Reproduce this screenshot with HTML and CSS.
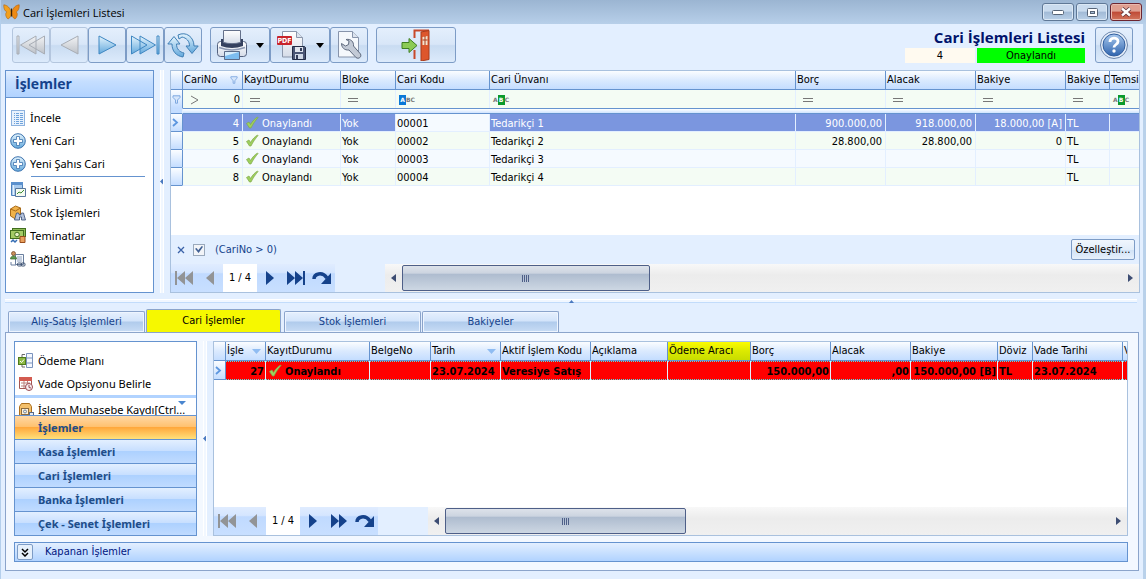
FILE: index.html
```html
<!DOCTYPE html>
<html lang="tr">
<head>
<meta charset="utf-8">
<title>Cari İşlemleri Listesi</title>
<link rel="stylesheet" href="styles.css">
</head>
<body>
<svg class="defs" aria-hidden="true">
  <defs>
    <linearGradient id="gBlue" x1="0" y1="0" x2="0" y2="1"><stop offset="0" stop-color="#e4f4fd"/><stop offset="1" stop-color="#62a8dc"/></linearGradient>
    <linearGradient id="gGrey" x1="0" y1="0" x2="0" y2="1"><stop offset="0" stop-color="#f2f3f5"/><stop offset="1" stop-color="#bcc1c8"/></linearGradient>
    <linearGradient id="gBall" x1="0" y1="0" x2="0" y2="1"><stop offset="0" stop-color="#a9c9ee"/><stop offset="1" stop-color="#2f64ae"/></linearGradient>
    <linearGradient id="gPaper" x1="0" y1="0" x2="0" y2="1"><stop offset="0" stop-color="#ffffff"/><stop offset="1" stop-color="#d5dce8"/></linearGradient>
    <symbol id="check" viewBox="0 0 14 13"><path d="M1.5 7.5 4 6l1.500 2.500C7.500 5 10 2.500 12.500 1l.5.6C10.500 4.500 8 8 6 12H4.500z" fill="#9ed05c" stroke="#7fa84c" stroke-width=".7"/></symbol>
    <symbol id="funnel" viewBox="0 0 9 9"><path d="M1 .8h7v1.700L5.500 5v3.200h-2V5L1 2.500z" fill="#d6e6fb" stroke="#7fa9e0"/></symbol>
    <symbol id="eq" viewBox="0 0 10 5"><path d="M0 1.500h10M0 4.500h10" stroke="#777"/></symbol>
    <symbol id="row" viewBox="0 0 7 9"><path d="M1 1l4 3.500L1 8" fill="none" stroke="#5d97e0" stroke-width="1.800"/></symbol>
    <symbol id="first" viewBox="0 0 20 16"><path d="M1 1h2v14H1zM3 8l8-7v14zM11 8l8-7v14z" fill="currentColor"/></symbol>
    <symbol id="last" viewBox="0 0 20 16"><path d="M17 1h2v14h-2zM17 8L9 1v14zM9 8L1 1v14z" fill="currentColor"/></symbol>
    <symbol id="prev" viewBox="0 0 10 16"><path d="M9 1v14L1 8z" fill="currentColor"/></symbol>
    <symbol id="next" viewBox="0 0 10 16"><path d="M1 1v14l8-7z" fill="currentColor"/></symbol>
    <symbol id="dbl" viewBox="0 0 20 16"><path d="M2 1v14l8-7zM10 1v14l8-7z" fill="currentColor"/></symbol>
    <symbol id="turn" viewBox="0 0 20 14"><path d="M2 8C2 3 10 0 15 7" fill="none" stroke="currentColor" stroke-width="3.500"/><path d="M19 2v11H9z" fill="currentColor"/></symbol>
    <symbol id="plus" viewBox="0 0 16 16"><circle cx="8" cy="8" r="7.300" fill="url(#gBlue)" stroke="#3d73ae"/><path d="M6.500 3.500h3v3h3v3h-3v3h-3v-3h-3v-3h3z" fill="#fff" stroke="#3d73ae" stroke-width=".8"/></symbol>
  </defs>
</svg>
<div class="window">
  <header class="titlebar">
    <svg class="app-icon" viewBox="0 0 17 16"><path d="M8.200 8.500C7.500 4 4 1 .8.8c-.3 3.200.8 6.200 3 7.200-2 1.200-1 5.500 1.200 7 2.200-.8 3.200-3.500 3.200-6.500z" fill="#f3a01c" stroke="#b0620c" stroke-width=".6"/><path d="M8.800 8.500C9.500 4 13 1 16.200.8c.3 3.200-.8 6.200-3 7.200 2 1.200 1 5.500-1.200 7-2.200-.8-3.200-3.500-3.200-6.500z" fill="#ee8a14" stroke="#b0620c" stroke-width=".6"/><path d="M8.500 4.500v8" stroke="#3b2208" stroke-width="1.200"/></svg>
    <span class="caption">Cari İşlemleri Listesi</span>
    <div class="window-buttons">
      <button class="win" aria-label="Simge durumuna küçült"><svg width="12" height="5"><rect x=".5" y=".5" width="11" height="4" rx="1" fill="#fff" stroke="#566477"/></svg></button>
      <button class="win" aria-label="Ekranı kapla"><svg width="11" height="9"><rect x=".5" y=".5" width="10" height="8" rx="1" fill="#fff" stroke="#566477"/><rect x="3.500" y="3.500" width="4" height="2" fill="#a9bfd8" stroke="#566477"/></svg></button>
      <button class="win close" aria-label="Kapat"><svg width="12" height="10"><path d="M2 1.500l8 7M10 1.500l-8 7" stroke="#5b3037" stroke-width="4"/><path d="M2 1.500l8 7M10 1.500l-8 7" stroke="#fff" stroke-width="2.400"/></svg></button>
    </div>
  </header>

  <div class="toolbar">
    <div class="tool-group">
      <button class="tool off" aria-label="İlk kayıt"><svg width="30" height="20"><path d="M1 1h2v18H1zM4.500 10L20 1v18zM13 10l15.500-9v18z" fill="url(#gGrey)" stroke="#a8adb5"/></svg></button>
      <button class="tool off" aria-label="Önceki kayıt"><svg width="19" height="20"><path d="M1 10l17-9v18z" fill="url(#gGrey)" stroke="#a8adb5"/></svg></button>
      <button class="tool" aria-label="Sonraki kayıt"><svg width="19" height="20"><path d="M18 10L1 1v18z" fill="url(#gBlue)" stroke="#3f87c2"/></svg></button>
      <button class="tool" aria-label="Son kayıt"><svg width="30" height="20"><path d="M27 1h2v18h-2zM17 10L1.500 1v18zM25.500 10L10 1v18z" fill="url(#gBlue)" stroke="#3f87c2"/></svg></button>
      <button class="tool" aria-label="Yenile"><svg width="32" height="26" viewBox="0 0 32 26"><path d="M5 12H.8L7 4.500l6 7.500H9.500c0 5 3 8 7.500 9l-1 4C9 24 5 19 5 12z" fill="url(#gBlue)" stroke="#3f7fb5"/><path d="M27 14h4.200L25 21.500 19 14h3.500c0-5-3-8-7.500-9l-3 2-1-4c8-4 16 2 16 11z" fill="url(#gBlue)" stroke="#3f7fb5"/></svg></button>
    </div>
    <div class="tool-group">
      <button class="tool wide" aria-label="Yazdır"><svg width="32" height="32" viewBox="0 0 32 32"><rect x="1.500" y="12.500" width="29" height="15" rx="3" fill="url(#gPaper)" stroke="#54627f"/><path d="M5 10h22v7c-7 2.500-15 2.500-22 0z" fill="#35415f"/><path d="M7.500 1.500h17v12c-5.500 1.500-11.500 1.500-17 0z" fill="url(#gPaper)" stroke="#64708a"/><path d="M3 18.500c8 3 18 3 26 0" fill="none" stroke="#8e9ab4" stroke-width="1.500"/><path d="M8.500 22.500h15v8h-15z" fill="#7dbdf0" stroke="#5b6b88"/><path d="M9 23h14l-14 4z" fill="#d8eefc"/></svg><svg width="8" height="5"><path d="M0 0h8L4 5z"/></svg></button>
      <button class="tool wide" aria-label="PDF kaydet"><svg width="32" height="32" viewBox="0 0 32 32"><path d="M6.500 2.500h14l6 6V28h-20z" fill="url(#gPaper)" stroke="#8b97ac"/><path d="M20.500 2.500v6h6" fill="#dce3ee" stroke="#8b97ac"/><rect x="1" y="7" width="15" height="9" rx="1" fill="#c8242b"/><text class="pdf" x="8.500" y="14">PDF</text><path d="M16.500 17.500h12l1 1v12h-13z" fill="#4a5675" stroke="#222c46"/><path d="M19 18h8v5h-8z" fill="#dfe5ee"/><path d="M19 25h8v5h-8z" fill="#cfd8e6"/><path d="M24 19h2v3h-2zM20 26h2v4h-2z" fill="#333d5a"/></svg><svg width="8" height="5"><path d="M0 0h8L4 5z"/></svg></button>
      <button class="tool" aria-label="Ayarlar"><svg width="28" height="32" viewBox="0 0 28 32"><path d="M3.500 2.500h14l6 6V28h-20z" fill="#f5f8fc" stroke="#8794ab"/><path d="M17.500 2.500v6h6" fill="#dce3ee" stroke="#8794ab"/><path d="M6.500 14.500l4 2.500 3-1.500.5-3.500-3-1.500c5-1 8 2.500 7.500 6.500l7 8c1.500 3-2 5.500-4.500 3.500l-7-7.500c-4.500.5-7.500-2.500-7.500-6.500z" fill="#c3cad6" stroke="#5f6a7e"/></svg></button>
    </div>
    <div class="tool-group">
      <button class="tool exit" aria-label="Çıkış"><svg width="30" height="32" viewBox="0 0 30 32"><path d="M13.500 9V1.500H28M13.500 21v9" fill="none" stroke="#c8492a" stroke-width="2"/><path d="M20 3l8-1.500v29L20 32z" fill="#dd562c" stroke="#a93a1a"/><path d="M21.500 8l5-1v9h-5z" fill="#f4e3cf"/><path d="M24 7v9M21.500 11h5" stroke="#a93a1a"/><path d="M1 13.500h7V9.500l8 7-8 7v-4H1z" fill="#8ccb55" stroke="#3f7f22"/></svg></button>
    </div>
    <div class="heading">
      <h1>Cari İşlemleri Listesi</h1>
      <div class="status"><span class="count">4</span><span class="state">Onaylandı</span></div>
    </div>
    <button class="tool help" aria-label="Yardım"><svg width="30" height="30" viewBox="0 0 30 30"><circle cx="15" cy="15" r="13.500" fill="#e6eef9" stroke="#6c87ad"/><circle cx="15" cy="15" r="11" fill="url(#gBall)" stroke="#325f9e"/><path d="M11 12c0-5 8-5 8-.5 0 3-4 3-4 6" fill="none" stroke="#fff" stroke-width="2.800"/><circle cx="15" cy="21" r="1.700" fill="#fff"/></svg></button>
  </div>

  <main class="content">
    <section class="upper">
      <nav class="side">
        <h2>İşlemler</h2>
        <ul>
          <li><a href="#"><svg width="16" height="16"><rect x="1.500" y=".5" width="13" height="15" fill="#e8f2fd" stroke="#8db2de"/><path d="M4 3.500h9M4 5.500h9M4 7.500h9M4 9.500h9M4 11.500h9M4 13.500h9" stroke="#6fa3dc"/><path d="M5.500 2v13M9.500 2v13" stroke="#e8f2fd"/></svg>İncele</a></li>
          <li><a href="#"><svg width="16" height="16"><use href="#plus"/></svg>Yeni Cari</a></li>
          <li><a href="#"><svg width="16" height="16"><use href="#plus"/></svg>Yeni Şahıs Cari</a></li>
          <li class="ruled"><a href="#"><svg width="16" height="16"><path d="M1.500.5h11v13h-11z" fill="#a9cbee" stroke="#4e82bd"/><path d="M1 0h12v3H1z" fill="#5c91cd"/><path d="M3.500 3v10" stroke="#e4f0fb"/><path d="M5.500 6.500h10v8h-10z" fill="#f4faf0" stroke="#58779c"/><path d="M7 12l2-2 2 1 3-3" fill="none" stroke="#3b8a35"/></svg>Risk Limiti</a></li>
          <li><a href="#"><svg width="16" height="16"><path d="M.5 4l5-3 5 2v8l-5 3-5-3z" fill="#f0b24a" stroke="#a86a18"/><path d="M.5 4l5 2 5-3" fill="none" stroke="#a86a18"/><path d="M4.500 15l2-7h2l1 2h1l1-2h2l2 7h-4v-3h-2v3z" fill="#b4c3dd" stroke="#354a74" stroke-width=".8"/></svg>Stok İşlemleri</a></li>
          <li><a href="#"><svg width="16" height="16"><rect x="2.500" y=".5" width="13" height="8" fill="#8fbc57" stroke="#416e1e"/><rect x=".5" y="2.500" width="13" height="8" fill="#a4cb66" stroke="#416e1e"/><circle cx="7" cy="6.500" r="2.300" fill="#e6f2c4" stroke="#416e1e"/><path d="M10 8.500h5v6h-5z" fill="#e9a05d" stroke="#984d1c"/><path d="M1 14l2-2 2 2 2-2" fill="none" stroke="#356db4" stroke-width="1.500"/></svg>Teminatlar</a></li>
          <li><a href="#"><svg width="16" height="16"><path d="M5.500 3.500h8v10h-8z" fill="#f8fbff" stroke="#6a7f9e"/><path d="M7 6h5M7 8h5M7 10h5" stroke="#8fa1bd"/><circle cx="3.500" cy="2.500" r="2" fill="#c98f5b" stroke="#6d4321" stroke-width=".7"/><path d="M.5 8c0-4 6-4 6 0z" fill="#5d9a51" stroke="#35652d" stroke-width=".7"/><path d="M1 11v3h5" fill="none" stroke="#6a7f9e"/><rect x="7.500" y="12" width="4" height="3" rx="1" fill="none" stroke="#435675"/><rect x="11" y="12" width="4" height="3" rx="1" fill="none" stroke="#435675"/></svg>Bağlantılar</a></li>
        </ul>
      </nav>
      <div class="vsplit"><i></i></div>
      <div class="grid">
        <table>
          <colgroup><col class="w11"><col class="w60"><col class="w98"><col class="w55"><col class="w94"><col><col class="w90"><col class="w90"><col class="w90"><col class="w44"><col class="w30"></colgroup>
          <thead>
            <tr class="head"><th></th><th><span class="th-flex">CariNo<svg width="8" height="8"><use href="#funnel"/></svg></span></th><th>KayıtDurumu</th><th>Bloke</th><th>Cari Kodu</th><th>Cari Ünvanı</th><th>Borç</th><th>Alacak</th><th>Bakiye</th><th>Bakiye D</th><th>Temsi</th></tr>
            <tr class="filter"><td class="ind"><svg width="9" height="9"><use href="#funnel"/></svg></td><td><span class="op-flex"><svg width="9" height="10"><path d="M1 1l7 4-7 4" fill="none" stroke="#777"/></svg>0</span></td><td><svg class="eq"><use href="#eq"/></svg></td><td><svg class="eq"><use href="#eq"/></svg></td><td><span class="abc start"><b>A</b>BC</span></td><td><span class="abc mid">A<b>B</b>C</span></td><td><svg class="eq"><use href="#eq"/></svg></td><td><svg class="eq"><use href="#eq"/></svg></td><td><svg class="eq"><use href="#eq"/></svg></td><td><svg class="eq"><use href="#eq"/></svg></td><td><span class="abc mid">A<b>B</b>C</span></td></tr>
            <tr class="band"><td></td><td colspan="10"></td></tr>
          </thead>
          <tbody>
            <tr class="selected"><td class="ind"><svg width="7" height="9"><use href="#row"/></svg></td><td class="num">4</td><td><svg class="ck"><use href="#check"/></svg>Onaylandı</td><td>Yok</td><td class="focus">00001</td><td>Tedarikçi 1</td><td class="num">900.000,00</td><td class="num">918.000,00</td><td class="num">18.000,00 [A]</td><td>TL</td><td></td></tr>
            <tr><td class="ind"></td><td class="num">5</td><td><svg class="ck"><use href="#check"/></svg>Onaylandı</td><td>Yok</td><td>00002</td><td>Tedarikçi 2</td><td class="num">28.800,00</td><td class="num">28.800,00</td><td class="num">0</td><td>TL</td><td></td></tr>
            <tr class="alt"><td class="ind"></td><td class="num">6</td><td><svg class="ck"><use href="#check"/></svg>Onaylandı</td><td>Yok</td><td>00003</td><td>Tedarikçi 3</td><td></td><td></td><td></td><td>TL</td><td></td></tr>
            <tr><td class="ind"></td><td class="num">8</td><td><svg class="ck"><use href="#check"/></svg>Onaylandı</td><td>Yok</td><td>00004</td><td>Tedarikçi 4</td><td></td><td></td><td></td><td>TL</td><td></td></tr>
          </tbody>
        </table>
        <div class="blank"></div>
        <div class="criteria">
          <button class="clear" aria-label="Filtreyi temizle"><svg width="8" height="8"><path d="M1 1l6 6M7 1L1 7" stroke="#3a62a8" stroke-width="1.300"/></svg></button>
          <label><input type="checkbox" checked><span>(CariNo &gt; 0)</span></label>
          <button class="customize">Özelleştir...</button>
        </div>
        <div class="footer">
          <div class="pager">
            <button disabled aria-label="İlk"><svg width="20" height="16"><use href="#first"/></svg></button><button disabled aria-label="Önceki"><svg width="10" height="16"><use href="#prev"/></svg></button><span class="page">1 / 4</span><button aria-label="Sonraki"><svg width="10" height="16"><use href="#next"/></svg></button><button aria-label="Son"><svg width="20" height="16"><use href="#last"/></svg></button><button aria-label="Yinele"><svg width="20" height="14"><use href="#turn"/></svg></button>
          </div>
          <div class="scroll"><button aria-label="Sola kaydır"><svg width="5" height="8"><path d="M5 0v8L0 4z"/></svg></button><div class="track"><div class="thumb"></div></div><button aria-label="Sağa kaydır"><svg width="5" height="8"><path d="M0 0v8l5-4z"/></svg></button></div>
        </div>
      </div>
    </section>

    <div class="hsplit"><svg width="5" height="3"><path d="M0 3h5L2.500 0z" fill="#4a79c0"/></svg></div>

    <div class="tabs" role="tablist">
      <button role="tab">Alış-Satış İşlemleri</button><button role="tab" aria-selected="true" class="active">Cari İşlemler</button><button role="tab">Stok İşlemleri</button><button role="tab">Bakiyeler</button>
    </div>
    <section class="lower">
      <div class="lower-row">
        <nav class="bar">
          <ul>
            <li><a href="#"><svg width="16" height="16"><path d="M8.500.5h6v14h-6zM8.500 5h6M8.500 10h6" fill="#f4f8ff" stroke="#7b93bd"/><rect x=".5" y="4.500" width="7" height="7" fill="#8cb944" stroke="#4e7a1c"/><path d="M2 8l1.500 1.500L6 6.500" fill="none" stroke="#fff"/><path d="M4 4V1.500h3M4 12v2h3" fill="none" stroke="#6b6b6b"/></svg>Ödeme Planı</a></li>
            <li><a href="#"><svg width="16" height="16"><path d="M1.500 1.500h12v11h-12z" fill="#fff" stroke="#a35652"/><path d="M1 1h13v4H1z" fill="#d35b50"/><path d="M3 7h9M3 10h6M6 5v7M9.500 5v7" stroke="#b9807d"/><circle cx="11" cy="11" r="3.500" fill="#f8eef0" stroke="#9b4b52"/><path d="M11 9v2.500l2 .5" fill="none" stroke="#9b4b52"/></svg>Vade Opsiyonu Belirle</a></li>
            <li class="cut"><a href="#"><svg width="16" height="16"><path d="M3.500 1.500h8l2 3v9h-12v-9z" fill="#f4c06b" stroke="#ad6f1c"/><rect x="3.500" y="6.500" width="7" height="6" fill="#fff2d8" stroke="#8d6b3e"/><circle cx="7" cy="9.500" r="1.500" fill="none" stroke="#6a83a8"/><rect x="11.500" y="10.500" width="4" height="4" fill="#e5eaf3" stroke="#5a6a88"/></svg>İşlem Muhasebe Kaydı[Ctrl...</a><svg class="more" width="8" height="4"><path d="M0 0h8L4 4z" fill="#4a86cf"/></svg></li>
          </ul>
          <button class="current">İşlemler</button>
          <button>Kasa İşlemleri</button>
          <button>Cari İşlemleri</button>
          <button>Banka İşlemleri</button>
          <button>Çek - Senet İşlemleri</button>
        </nav>
        <div class="vsplit"><i></i></div>
        <div class="grid">
          <table>
            <colgroup><col class="w11"><col class="w40"><col class="w104"><col class="w61"><col class="w70"><col class="w90"><col><col class="w83"><col class="w80"><col class="w80"><col class="w87"><col class="w35"><col class="w90"><col class="w5"></colgroup>
            <thead>
              <tr class="head"><th></th><th><span class="th-flex">İşle<svg width="9" height="5"><path d="M0 0h9L4.500 5z" fill="#8fbcf2"/></svg></span></th><th>KayıtDurumu</th><th>BelgeNo</th><th><span class="th-flex">Tarih<svg width="9" height="5"><path d="M0 0h9L4.500 5z" fill="#8fbcf2"/></svg></span></th><th>Aktif İşlem Kodu</th><th>Açıklama</th><th class="marked">Ödeme Aracı</th><th>Borç</th><th>Alacak</th><th>Bakiye</th><th>Döviz</th><th>Vade Tarihi</th><th>V</th></tr>
            </thead>
            <tbody>
              <tr class="alert"><td class="ind"><svg width="7" height="9"><use href="#row"/></svg></td><td class="num">27</td><td><svg class="ck"><use href="#check"/></svg>Onaylandı</td><td></td><td>23.07.2024</td><td>Veresiye Satış</td><td></td><td></td><td class="num">150.000,00</td><td class="num">,00</td><td class="num">150.000,00 [B]</td><td>TL</td><td>23.07.2024</td><td></td></tr>
            </tbody>
          </table>
          <div class="blank"></div>
          <div class="footer">
            <div class="pager">
              <button disabled aria-label="İlk"><svg width="20" height="16"><use href="#first"/></svg></button><button disabled aria-label="Önceki"><svg width="10" height="16"><use href="#prev"/></svg></button><span class="page">1 / 4</span><button aria-label="Sonraki"><svg width="10" height="16"><use href="#next"/></svg></button><button aria-label="Son"><svg width="20" height="16"><use href="#dbl"/></svg></button><button aria-label="Yinele"><svg width="20" height="14"><use href="#turn"/></svg></button>
            </div>
            <div class="scroll"><button aria-label="Sola kaydır"><svg width="5" height="8"><path d="M5 0v8L0 4z"/></svg></button><div class="track"><div class="thumb"></div></div><button aria-label="Sağa kaydır"><svg width="5" height="8"><path d="M0 0v8l5-4z"/></svg></button></div>
          </div>
        </div>
      </div>
      <div class="closed">
        <button aria-label="Aç"><svg width="8" height="9"><path d="M1 1l3 3 3-3M1 5l3 3 3-3" fill="none" stroke="#000" stroke-width="1.500"/></svg></button>
        <span>Kapanan İşlemler</span>
      </div>
    </section>
  </main>
</div>
</body>
</html>
```
FILE: styles.css
```css
* { box-sizing: border-box; }
body {
  margin: 0;
  font: 11px/14px "DejaVu Sans Condensed", "DejaVu Sans", sans-serif;
  color: #000;
}
button { margin: 0; padding: 0; font: inherit; color: inherit; }
ul { margin: 0; padding: 0; list-style: none; }
a { color: inherit; text-decoration: none; }
h1, h2 { margin: 0; }
.defs { position: absolute; width: 0; height: 0; }

.window {
  display: flex;
  flex-direction: column;
  min-height: 100vh;
  background: #e3efff;
  border-left: 1px solid #b4cfec;
  border-right: 3px solid #b9d1ea;
}

/* Title bar */
.titlebar {
  display: flex;
  align-items: center;
  height: 24px;
  margin-right: -3px;
  padding: 0 4px 0 2px;
  background: linear-gradient(#9bb5d2, #b7cfe9);
}
.app-icon { width: 17px; height: 16px; }
.caption { flex: 1; margin-left: 3px; padding-top: 1px; font: 11px/16px "Open Sans", sans-serif; }
.window-buttons { display: flex; gap: 2px; }
.win {
  display: flex;
  align-items: center;
  justify-content: center;
  width: 32px;
  height: 18px;
  border: 1px solid #5f7896;
  border-radius: 3px;
  background: linear-gradient(#c9dbee 45%, #a1bad6 50%, #b9d0e8);
  box-shadow: inset 0 0 0 1px #dbe8f5;
}
.close {
  border-color: #6c2530;
  background: linear-gradient(#df9f90 45%, #bf4a36 50%, #d2755c);
  box-shadow: inset 0 0 0 1px #e9b9ae;
}

/* Toolbar */
.toolbar {
  display: flex;
  align-items: flex-start;
  gap: 8px;
  padding: 3px 10px 7px 11px;
}
.tool-group { display: flex; }
.tool {
  display: flex;
  align-items: center;
  justify-content: center;
  gap: 8px;
  width: 38px;
  height: 36px;
  border: 1px solid #7d9cc6;
  border-radius: 3px;
  background: linear-gradient(#e4effc, #d8e6f8 48%, #c9dcf2 52%, #dceafb);
}
.off { border-color: #b4c6de; }
.wide { width: 60px; }
.exit { width: 80px; }
.pdf { font: bold 7px "DejaVu Sans Condensed", sans-serif; fill: #fff; text-anchor: middle; }
.heading { flex: 1; text-align: right; }
.heading h1 { font: bold 15px/20px "Open Sans", sans-serif; color: #00126b; }
.status { display: flex; justify-content: flex-end; gap: 2px; margin-top: 1px; text-align: center; line-height: 15px; }
.count { width: 70px; background: #fffaf0; }
.state { width: 108px; background: #0f0; }
.help { margin-left: 2px; }

/* Main area */
.content { display: flex; flex: 1; flex-direction: column; padding: 0 3px 9px 4px; }
.upper { display: flex; }
.side { width: 149px; border: 1px solid #6593cf; background: #fff; }
.side h2 {
  height: 27px;
  padding-left: 9px;
  border-bottom: 1px solid #6593cf;
  background: linear-gradient(#e3efff, #c5deff 40%, #b1d3ff);
  font: bold 14px/26px "Open Sans", sans-serif;
  color: #15428b;
}
.side ul { padding: 8px 8px 0 4px; }
.side li a, .bar li a {
  display: flex;
  align-items: center;
  gap: 4px;
  height: 23px;
  font: 11px/23px "Noto Sans", sans-serif;
  white-space: nowrap;
}
.ruled::before { content: ""; display: block; margin: 1px 0 1px 21px; border-top: 1px solid #6593cf; }

.vsplit {
  display: flex;
  align-items: center;
  width: 16px;
  padding-left: 6px;
  background: linear-gradient(90deg, transparent 6px, #fff 6px 7px, #f1f7ff 7px 9px, #fff 9px 10px, #e3efff 10px);
}
.vsplit i { width: 3px; height: 6px; background: #4a79c0; clip-path: polygon(100% 0, 100% 100%, 0 50%); }

/* Data grid */
.grid {
  display: flex;
  flex: 1;
  flex-direction: column;
  min-width: 0;
  border: 1px solid #a9c1de;
  background: #fff;
}
table { width: 100%; table-layout: fixed; border-spacing: 0; }
.w5 { width: 5px; } .w11 { width: 11px; } .w30 { width: 30px; } .w35 { width: 35px; }
.w40 { width: 40px; } .w44 { width: 44px; } .w55 { width: 55px; } .w60 { width: 60px; }
.w61 { width: 61px; } .w70 { width: 70px; } .w80 { width: 80px; } .w83 { width: 83px; }
.w87 { width: 87px; } .w90 { width: 90px; } .w94 { width: 94px; } .w98 { width: 98px; }
.w104 { width: 104px; }
th, td {
  overflow: hidden;
  height: 18px;
  padding: 0 2px 0 1px;
  border-left: 1px solid #e3efff;
  font-weight: normal;
  text-align: left;
  vertical-align: middle;
  white-space: nowrap;
}
th:first-child, td:first-child { border-left: 0; }
th {
  height: 19px;
  border-bottom: 1px solid #6593cf;
  border-left-color: #6593cf;
  background: linear-gradient(#fbfdff, #dbeafe 50%, #c4ddff);
}
.th-flex, .op-flex { display: flex; align-items: center; justify-content: space-between; padding-right: 2px; }
.op-flex { padding: 0 0 0 6px; }
td { padding-top: 2px; border-bottom: 1px solid #e3efff; background: #f4fcf4; }
.alt td { background: #f5faff; }
.filter td { border-bottom: 0; }
.band td { height: 6px; padding: 0; border-top: 1px solid #6593cf; border-bottom: 1px solid #6593cf; background: linear-gradient(#fff, #cfe3ff); line-height: 0; }
.band td:first-child { border-top: 0; background: #c4ddff; }
td.ind, .alt td.ind {
  padding: 0 1px;
  border-bottom: 1px solid #6593cf;
  background: linear-gradient(#fbfdff, #c4ddff);
}
.filter td.ind { border-bottom: 0; }
td.ind + td { border-left-color: #6593cf; }
td svg { display: inline-block; vertical-align: middle; }
.ind svg { display: block; }
.eq { width: 10px; height: 5px; margin: -2px 0 0 6px; }
.ck { width: 14px; height: 13px; margin: -2px 3px 0 1px; }
td.num { padding-right: 3px; text-align: right; }
.selected td:not(.ind):not(.focus) { background: #7b96df; color: #fff; }
.selected .focus { background: #f5faff; }
.abc { display: flex; align-items: center; margin-left: 2px; font: bold 6px/10px "DejaVu Sans", sans-serif; color: #777; }
.abc b { width: 7px; color: #fff; text-align: center; }
.start b { background: #0a78d7; }
.mid b { background: #0a9a2c; }
.alert td:not(.ind) {
  height: 19px;
  padding-right: 1px;
  border-bottom: 0;
  background:
    repeating-linear-gradient(90deg, #4fe0e8 0 1px, #f00 1px 2px) top / 100% 1px no-repeat,
    repeating-linear-gradient(90deg, #4fe0e8 0 1px, #f00 1px 2px) bottom / 100% 1px no-repeat,
    #f00;
  font-weight: bold;
}
th.marked { background: linear-gradient(#fbfb00, #dcea00 50%, #c8dc00); }
.blank { flex: 1; min-height: 49px; }

.criteria { display: flex; align-items: center; height: 29px; padding: 0 4px 0 6px; background: #e3efff; color: #15428b; }
.criteria label { display: flex; flex: 1; align-items: center; gap: 10px; }
.criteria input {
  display: flex;
  align-items: center;
  justify-content: center;
  width: 12px;
  height: 12px;
  margin: 0;
  appearance: none;
  border: 1px solid #9aa9bc;
  background: #f2f4f8;
}
.criteria input:checked::before { content: ""; width: 8px; height: 7px; background: #3f5f93; clip-path: polygon(0 40%, 20% 30%, 40% 60%, 85% 0, 100% 10%, 45% 100%); }
.clear { display: flex; width: 16px; border: 0; background: none; }
.customize {
  width: 64px;
  height: 21px;
  border: 1px solid #7d9cc6;
  border-radius: 2px;
  background: linear-gradient(#f0f6fd, #e2edf9 50%, #d0e2f6 52%, #e6f0fc);
  color: #000;
  white-space: nowrap;
}
.footer { display: flex; gap: 50px; height: 28px; background: #e3efff; }
.pager { display: flex; align-items: center; width: 164px; background: linear-gradient(#e0ecff, #d5e6ff 30%, #c0daff 35%, #c8dfff); }
.pager button { display: flex; justify-content: center; width: 26px; border: 0; background: none; color: #15428b; }
.pager button:disabled { color: #929496; }
.page { width: 34px; background: #fff; line-height: 28px; text-align: center; }
.scroll { display: flex; flex: 1; background: linear-gradient(#f8f8f8, #ececec 40%, #f0f0f0); }
.scroll button { display: flex; align-items: center; justify-content: center; width: 17px; border: 0; background: none; }
.scroll path { fill: #3d4d73; }
.track { flex: 1; padding: 1px 0; }
.thumb {
  display: flex;
  width: 34.5%;
  height: 26px;
  border: 1px solid #4e5f88;
  border-radius: 2px;
  background: linear-gradient(#dde2ea, #ccd4e0 30%, #aebccf 34%, #cdd7e3);
}
.lower .thumb { width: 36.3%; }
.thumb::before { content: ""; width: 8px; height: 7px; margin: auto; background: repeating-linear-gradient(90deg, #4e5f88 0 1px, transparent 1px 2px); }

.hsplit {
  display: flex;
  justify-content: center;
  align-items: center;
  height: 16px;
  margin-right: 3px;
  background: linear-gradient(transparent 6px, #fff 6px 7px, #f1f7ff 7px 9px, #c2dcfb 9px 10px, transparent 10px);
}

/* Tabs */
.tabs { display: flex; gap: 1px; align-items: flex-end; height: 23px; padding-left: 3px; }
.tabs button {
  width: 137px;
  height: 21px;
  border: 1px solid #8ba4cb;
  border-bottom: 0;
  border-radius: 2px 2px 0 0;
  background: linear-gradient(#e6f0fe, #d3e4fa 45%, #b0cbec 50%, #c8dcf5);
  box-shadow: inset 0 0 0 1px #eef5ff;
  color: #15428b;
}
.tabs .active { width: 135px; height: 23px; margin-right: 2px; background: #f6f800; box-shadow: none; color: #000; }

.lower {
  display: flex;
  flex: 1;
  flex-direction: column;
  gap: 6px;
  margin-right: 1px;
  padding: 8px 10px 8px 8px;
  border: 1px solid #8ba4cb;
  background: #f3f8ff;
}
.lower-row { display: flex; flex: 1; }
.bar { display: flex; flex-direction: column; width: 183px; border: 1px solid #6593cf; background: #fff; }
.bar ul { flex: 1; padding-top: 7px; }
.bar li a { padding-left: 3px; }
.bar .cut { position: relative; overflow: hidden; height: 20px; border-top: 3px solid #b1d3ff; }
.more { position: absolute; top: 3px; right: 10px; }
.bar button {
  height: 24px;
  padding-left: 23px;
  border: 0;
  border-top: 1px solid #6593cf;
  background: linear-gradient(#e3efff, #c6deff 49%, #add1ff 50%, #c0dbff);
  font: bold 11px/22px "Noto Sans", sans-serif;
  color: #204d89;
  text-align: left;
}
.bar .current { background: linear-gradient(#ffd8a5, #ffc06c 49%, #ffa83c 50%, #ffe07b); }
.closed {
  display: flex;
  align-items: center;
  gap: 12px;
  height: 20px;
  padding-left: 2px;
  border: 1px solid #6593cf;
  background: linear-gradient(#e3efff, #b1d3ff);
  color: #00157f;
}
.closed button {
  display: flex;
  align-items: center;
  justify-content: center;
  width: 16px;
  height: 16px;
  border: 1px solid #7d9cc6;
  border-radius: 2px;
  background: #e6f0fb;
}
```
